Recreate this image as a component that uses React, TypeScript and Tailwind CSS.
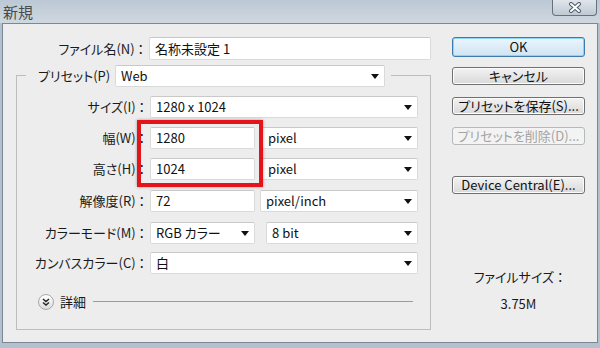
import React from "react";

const font = "font-['Noto_Sans_CJK_JP','Noto_Sans',sans-serif] [font-feature-settings:'palt']";

function Arrow() {
  return (
    <svg width="8" height="5" viewBox="0 0 8 5" className="shrink-0">
      <path d="M0 0 H8 L4 5 Z" fill="#111" />
    </svg>
  );
}

function Field({ w, value }: { w: string; value: string }) {
  return (
    <div className={`${w} h-[22px] bg-white border border-[#dadada] border-t-[#c9c9c9] rounded-[2px] flex items-center pl-[5px] text-[13px] text-[#111]`}>
      {value}
    </div>
  );
}

function Select({ w, value }: { w: string; value: string }) {
  return (
    <div className={`${w} h-[22px] bg-white border border-[#dadada] border-t-[#c9c9c9] rounded-[2px] flex items-center justify-between pl-[5px] pr-[5px] text-[13px] text-[#111]`}>
      <span>{value}</span>
      <Arrow />
    </div>
  );
}

function Label({ children }: { children: React.ReactNode }) {
  return (
    <div className="w-[128px] mr-[5px] text-right text-[13px] text-[#1a1a1a] whitespace-nowrap">{children}</div>
  );
}

function Btn({ children, h = "h-[18px]", mt, primary, disabled }: { children: React.ReactNode; h?: string; mt: string; primary?: boolean; disabled?: boolean }) {
  const tone = disabled
    ? "border-[#b5b9bc] bg-[#f3f3f3] text-[#a3a3a3]"
    : primary
      ? "border-[#3d7bad] bg-linear-to-b from-[#eaf6fd] to-[#cfe4f2] shadow-[inset_0_0_0_1px_#8fd3f7] text-[#111]"
      : "border-[#707070] bg-linear-to-b from-[#f3f3f3] to-[#d9d9d9] shadow-[inset_0_0_0_1px_#fcfcfc] text-[#111]";
  return (
    <div className={`${mt} ${h} w-[133px] rounded-[3px] border flex items-center justify-center text-[13px] ${tone}`}>
      {children}
    </div>
  );
}

export default function App() {
  return (
    <div className={`relative w-[600px] h-[348px] overflow-hidden flex flex-col bg-[#b3c0ce] ${font}`}>
      {/* title bar */}
      <div className="h-[23px] shrink-0 flex items-start justify-between bg-linear-to-b from-[#bcc8d5] to-[#cfd8e1]">
        <span className="pl-[3px] pt-[1px] text-[15px] text-[#4a4a4a]">新規</span>
        <div className="mr-[3px] w-[45px] h-[16px] rounded-b-[4px] border border-t-0 border-[#66717e] bg-linear-to-b from-[#dfe5eb] to-[#bfc9d3] flex items-center justify-center">
          <svg width="14" height="11" viewBox="0 0 14 11">
            <path d="M3 2 L11 9 M11 2 L3 9" stroke="#4e5966" strokeWidth="4" strokeLinecap="round" />
            <path d="M3 2 L11 9 M11 2 L3 9" stroke="#fff" strokeWidth="2" strokeLinecap="round" />
          </svg>
        </div>
      </div>

      {/* dialog body */}
      <div className="flex-1 mx-[2px] mb-[5px] border border-[#7a8794] bg-[#ededed] flex">
        <div className="w-[428px] pl-[13px] flex flex-col">
          <div className="mt-[13px] flex items-center">
            <Label>ファイル名(N) ：</Label>
            <div className="w-[282px] h-[23px] bg-white border border-[#dadada] border-t-[#c9c9c9] rounded-[2px] flex items-center pl-[5px] text-[13px] text-[#111]">
              名称未設定 1
            </div>
          </div>

          <div className="mt-[15px] w-[415px] h-[255px] border border-[#bdbdbd] flex flex-col">
            <div className="-mt-[11px] ml-[9px] w-fit bg-[#ededed] pl-[12px] pr-[6px] flex items-center">
              <div className="w-[72px] mr-[5px] text-[13px] text-[#1a1a1a] whitespace-nowrap">プリセット(P) ：</div>
              <Select w="w-[270px]" value="Web" />
            </div>

            <div className="mt-[9px] flex items-center">
              <Label>サイズ(I) ：</Label>
              <Select w="w-[268px]" value="1280 x 1024" />
            </div>

            <div className="mt-[9px] flex items-center">
              <Label>幅(W) ：</Label>
              <Field w="w-[105px]" value="1280" />
              <div className="ml-[7px]"><Select w="w-[156px]" value="pixel" /></div>
            </div>

            <div className="mt-[9px] flex items-center">
              <Label>高さ(H) ：</Label>
              <Field w="w-[105px]" value="1024" />
              <div className="ml-[7px]"><Select w="w-[156px]" value="pixel" /></div>
            </div>

            <div className="mt-[10px] flex items-center">
              <Label>解像度(R) ：</Label>
              <Field w="w-[105px]" value="72" />
              <div className="ml-[5px]"><Select w="w-[158px]" value="pixel/inch" /></div>
            </div>

            <div className="mt-[10px] flex items-center">
              <Label>カラーモード(M) ：</Label>
              <Select w="w-[105px]" value="RGB カラー" />
              <div className="ml-[11px]"><Select w="w-[152px]" value="8 bit" /></div>
            </div>

            <div className="mt-[8px] flex items-center">
              <Label>カンバスカラー(C) ：</Label>
              <Select w="w-[268px]" value="白" />
            </div>

            <div className="mt-[18px] ml-[21px] mr-[17px] flex items-center">
              <div className="w-[16px] h-[16px] rounded-full border border-[#a8a8a8] bg-linear-to-b from-[#ffffff] to-[#dcdcdc] flex items-center justify-center">
                <svg width="8" height="8" viewBox="0 0 8 8">
                  <path d="M1 1 L4 3.5 L7 1 M1 4.5 L4 7 L7 4.5" stroke="#222" strokeWidth="1.4" fill="none" />
                </svg>
              </div>
              <span className="ml-[6px] text-[13px] text-[#1a1a1a]">詳細</span>
              <div className="ml-[7px] flex-1 h-px bg-[#9c9c9c]" />
            </div>
          </div>
        </div>

        <div className="ml-[21px] w-[133px] flex flex-col">
          <Btn mt="mt-[13px]" h="h-[20px]" primary>OK</Btn>
          <Btn mt="mt-[10px]">キャンセル</Btn>
          <Btn mt="mt-[12px]">プリセットを保存(S)...</Btn>
          <Btn mt="mt-[12px]" disabled>プリセットを削除(D)...</Btn>
          <Btn mt="mt-[31px]">Device Central(E)...</Btn>
          <div className="mt-[73px] text-center text-[13px] text-[#1a1a1a]">ファイルサイズ ：</div>
          <div className="mt-[7px] text-center text-[13px] text-[#1a1a1a]">3.75M</div>
        </div>
      </div>

      {/* red highlight */}
      <div className="absolute left-[137px] top-[120px] w-[126px] h-[67px] border-4 border-[#e3151b] shadow-[0_0_3px_rgba(0,0,0,0.35)]" />
    </div>
  );
}
